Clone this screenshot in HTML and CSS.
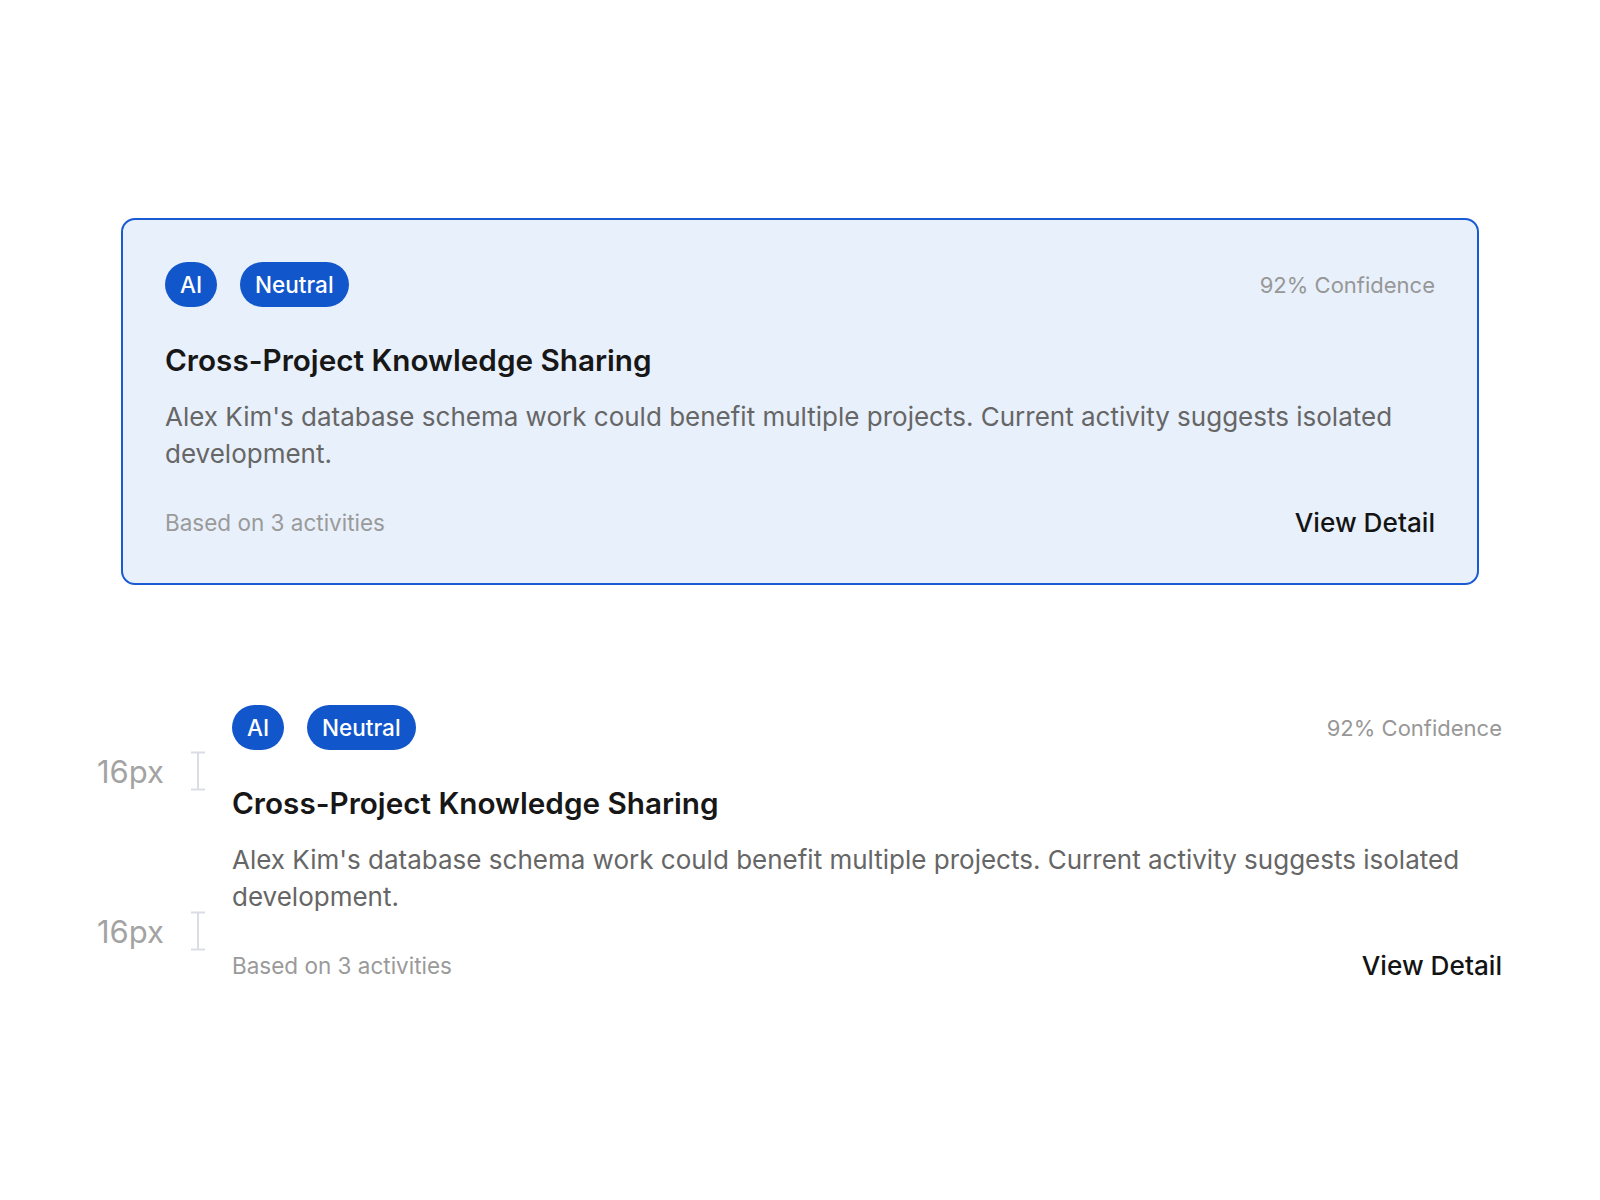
FILE: index.html
```html
<!DOCTYPE html>
<html lang="en">
<head>
<meta charset="utf-8">
<title>Insight Card</title>
<link rel="stylesheet" href="styles.css">
</head>
<body>
<div class="page">
  <div class="card card-filled">
    <div class="card-head">
      <div class="tags">
        <span class="pill">AI</span>
        <span class="pill">Neutral</span>
      </div>
      <span class="confidence">92% Confidence</span>
    </div>
    <h2 class="title">Cross-Project Knowledge Sharing</h2>
    <p class="desc">Alex Kim's database schema work could benefit multiple projects. Current activity suggests isolated development.</p>
    <div class="card-foot">
      <span class="based">Based on 3 activities</span>
      <span class="detail">View Detail</span>
    </div>
  </div>

  <div class="card card-spec">
    <div class="card-head">
      <div class="tags">
        <span class="pill">AI</span>
        <span class="pill">Neutral</span>
      </div>
      <span class="confidence">92% Confidence</span>
    </div>
    <h2 class="title">Cross-Project Knowledge Sharing</h2>
    <p class="desc">Alex Kim's database schema work could benefit multiple projects. Current activity suggests isolated development.</p>
    <div class="card-foot">
      <span class="based">Based on 3 activities</span>
      <span class="detail">View Detail</span>
    </div>

    <div class="measure measure-1">
      <span class="measure-label">16px</span>
      <svg class="beam" width="18" height="40" viewBox="0 0 18 40"><path d="M2 1.5H16M9 1.5V38.5M2 38.5H16" fill="none" stroke="#dadde3" stroke-width="2"/></svg>
    </div>
    <div class="measure measure-2">
      <span class="measure-label">16px</span>
      <svg class="beam" width="18" height="40" viewBox="0 0 18 40"><path d="M2 1.5H16M9 1.5V38.5M2 38.5H16" fill="none" stroke="#dadde3" stroke-width="2"/></svg>
    </div>
  </div>
</div>
</body>
</html>
```

FILE: styles.css
```css
html, body {
  margin: 0;
  padding: 0;
  background: #ffffff;
}

body {
  font-family: Inter, "Noto Sans", "Liberation Sans", sans-serif;
  color: #1a1a1a;
}

.page {
  padding-top: 218px;
}

.card {
  box-sizing: border-box;
  width: 1358px;
  border: 2px solid transparent;
  border-radius: 14px;
  padding: 42px 42px 43px;
  display: flex;
  flex-direction: column;
}

.card-filled {
  margin-left: 121px;
  background: #e8f0fb;
  border-color: #1a5bd3;
}

.card-spec {
  position: relative;
  margin-left: 188px;
  margin-top: 76px;
}

.card-head {
  display: flex;
  align-items: center;
  justify-content: space-between;
  height: 45px;
}

.tags {
  display: flex;
  gap: 23px;
}

.pill {
  display: inline-flex;
  align-items: center;
  height: 45px;
  padding: 0 15px;
  border-radius: 23px;
  background: #1256cc;
  color: #ffffff;
  font-size: 22.5px;
  font-weight: 500;
  box-sizing: border-box;
}

.confidence {
  font-size: 22px;
  color: #979797;
}

.title {
  margin: 35px 0 0;
  font-size: 29.7px;
  line-height: 36px;
  font-weight: 600;
  color: #171717;
}

.desc {
  margin: 20px 0 0;
  font-size: 26px;
  line-height: 37px;
  color: #666666;
}

.card-foot {
  margin-top: 32px;
  display: flex;
  align-items: center;
  justify-content: space-between;
  height: 36px;
}

.based {
  font-size: 22.5px;
  color: #9a9a9a;
}

.detail {
  font-size: 26.2px;
  font-weight: 500;
  color: #141414;
}

.measure {
  position: absolute;
  left: -93px;
  display: flex;
  align-items: center;
}

.measure-1 {
  top: 88px;
}

.measure-2 {
  top: 248px;
}

.measure-label {
  width: 70px;
  font-size: 31px;
  color: #a3a3a3;
  font-weight: 400;
}

.beam {
  display: block;
  margin-left: 22px;
}
```
